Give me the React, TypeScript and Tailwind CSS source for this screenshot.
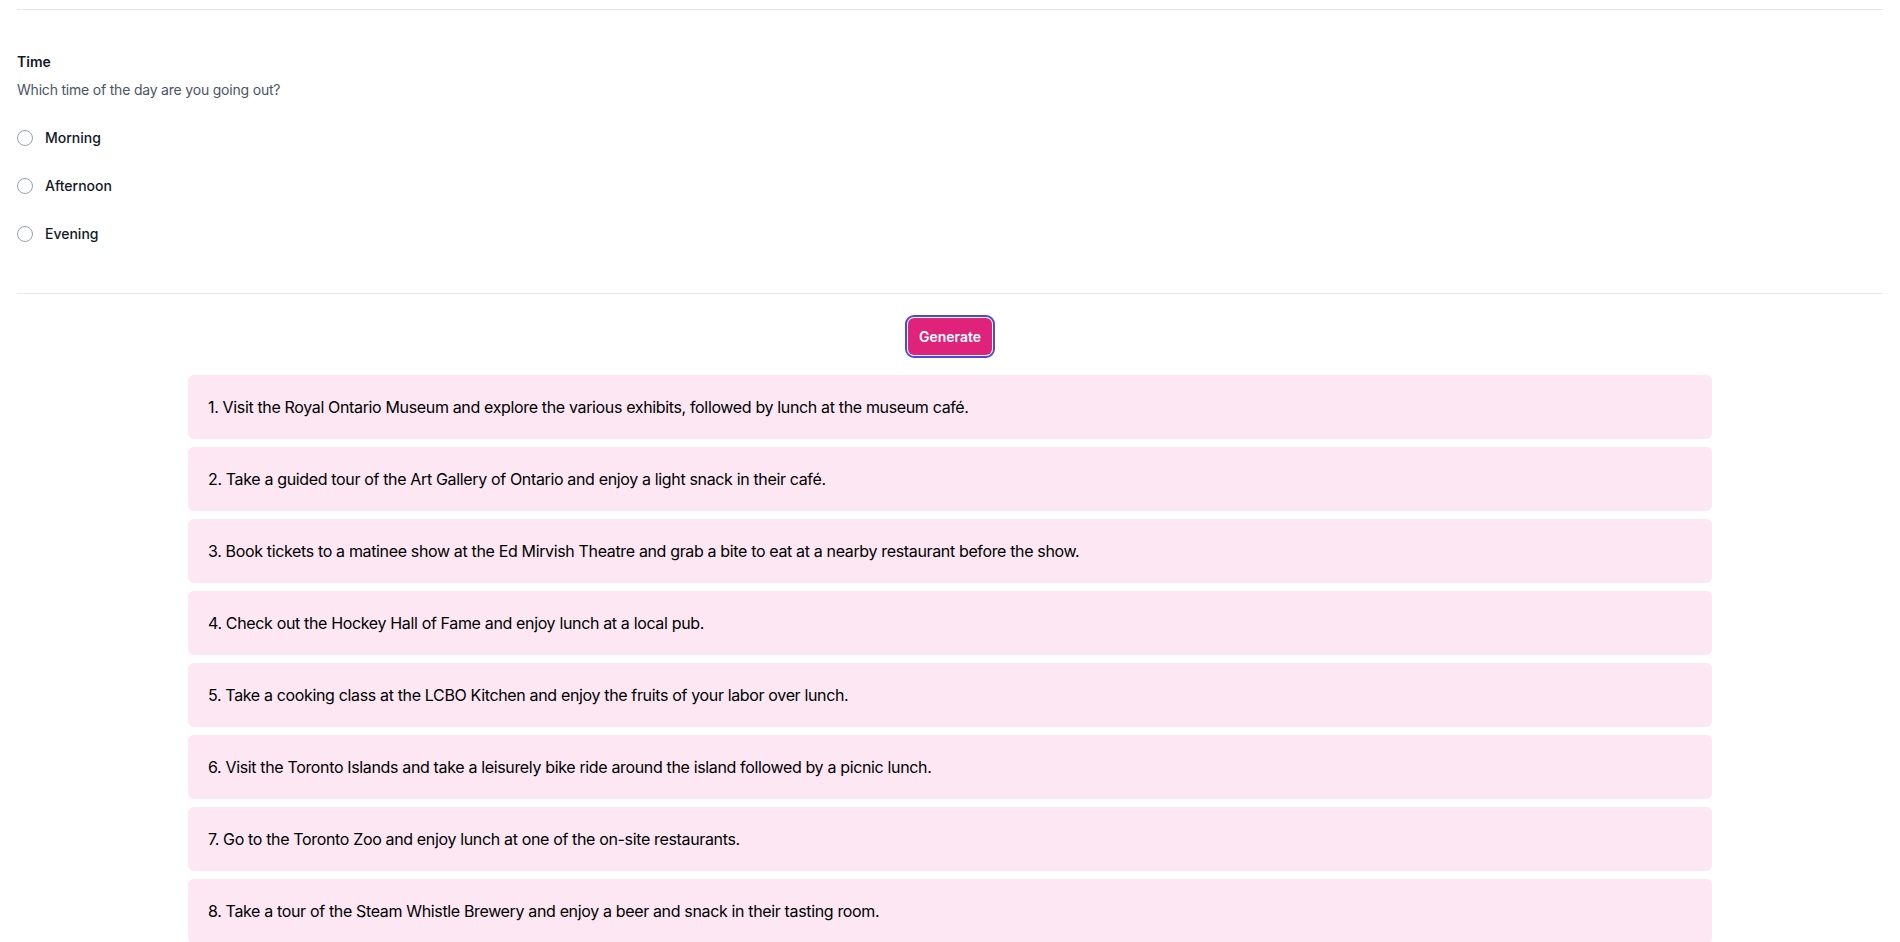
import { useState } from "react";

const TIMES = ["Morning", "Afternoon", "Evening"];

const IDEAS = [
    "1. Visit the Royal Ontario Museum and explore the various exhibits, followed by lunch at the museum café.",
    "2. Take a guided tour of the Art Gallery of Ontario and enjoy a light snack in their café.",
    "3. Book tickets to a matinee show at the Ed Mirvish Theatre and grab a bite to eat at a nearby restaurant before the show.",
    "4. Check out the Hockey Hall of Fame and enjoy lunch at a local pub.",
    "5. Take a cooking class at the LCBO Kitchen and enjoy the fruits of your labor over lunch.",
    "6. Visit the Toronto Islands and take a leisurely bike ride around the island followed by a picnic lunch.",
    "7. Go to the Toronto Zoo and enjoy lunch at one of the on-site restaurants.",
    "8. Take a tour of the Steam Whistle Brewery and enjoy a beer and snack in their tasting room.",
];

export default function App() {
    const [time, setTime] = useState<string | null>(null);

    return (
        <div className="min-h-screen bg-white font-['Inter',sans-serif] text-gray-900">
            <div className="mx-[17px] pt-[9px]">
                <div className="border-t border-gray-200" />

                {/* Time question */}
                <div className="pt-[42px] pb-[49px]">
                    <div className="text-[14px] leading-5 font-semibold text-gray-900">Time</div>
                    <p className="mt-[8px] text-[14px] leading-5 tracking-[-0.2px] text-gray-600">Which time of the day are you going out?</p>
                    <div className="mt-[28px] flex flex-col gap-[28px]">
                        {TIMES.map((t) => (
                            <label key={t} className="flex items-center h-5 cursor-pointer">
                                <input
                                    type="radio"
                                    name="time"
                                    checked={time === t}
                                    onChange={() => setTime(t)}
                                    className="appearance-none w-4 h-4 rounded-full border border-gray-400 bg-white checked:border-[5px] checked:border-indigo-600"
                                />
                                <span className="ml-3 text-[14px] leading-5 font-medium text-gray-900">{t}</span>
                            </label>
                        ))}
                    </div>
                </div>

                <div className="border-t border-gray-200" />
            </div>

            <div className="flex justify-center pt-[24px]">
                <button className="h-[37px] px-[11px] rounded-md bg-[#e0237a] text-white text-[14px] font-semibold outline-2 outline-offset-1 outline-[#5046e5]">
                    Generate
                </button>
            </div>

            {/* Results */}
            <div className="mx-auto w-[1524px] mt-[20px] flex flex-col gap-2 pb-8">
                {IDEAS.map((idea) => (
                    <div key={idea} className="h-16 flex items-center px-5 rounded-md bg-[#fce7f3] text-[16px] tracking-[-0.35px] text-black">
                        {idea}
                    </div>
                ))}
            </div>
        </div>
    );
}
